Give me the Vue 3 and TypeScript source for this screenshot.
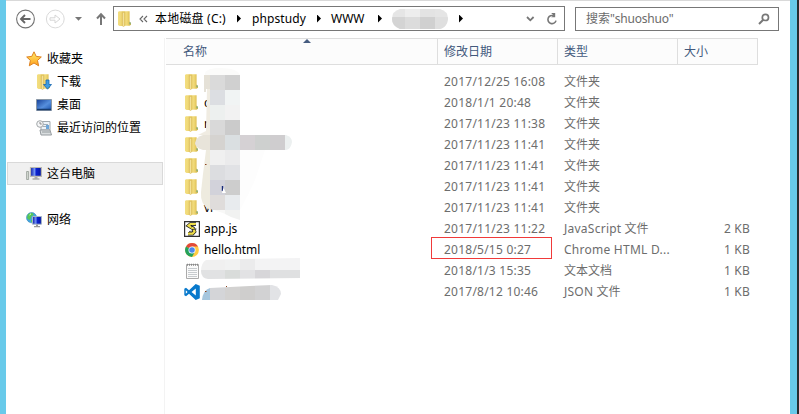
<script setup lang="ts">
import { computed } from 'vue'

type Icon = 'folder' | 'js' | 'chrome' | 'text' | 'vscode'
interface FileRow { icon: Icon; name: string; date: string; latin: string; cjk: string; size: string; marked?: boolean }
interface Tile { x: number; y: number; w: number; h: number; c: string }

const folder = (name: string, date: string): FileRow => ({ icon: 'folder', name, date, latin: '', cjk: '文件夹', size: '' })

const rows: FileRow[] = [
  folder('', '2017/12/25 16:08'),
  folder('c', '2018/1/1 20:48'),
  folder('n', '2017/11/23 11:38'),
  folder('', '2017/11/23 11:41'),
  folder('', '2017/11/23 11:41'),
  folder('', '2017/11/23 11:41'),
  folder('vi', '2017/11/23 11:41'),
  { icon: 'js', name: 'app.js', date: '2017/11/23 11:22', latin: 'JavaScript', cjk: '文件', size: '2 KB' },
  { icon: 'chrome', name: 'hello.html', date: '2018/5/15 0:27', latin: 'Chrome HTML D...', cjk: '', size: '1 KB', marked: true },
  { icon: 'text', name: '', date: '2018/1/3 15:35', latin: '', cjk: '文本文档', size: '1 KB' },
  { icon: 'vscode', name: '', date: '2017/8/12 10:46', latin: 'JSON', cjk: '文件', size: '1 KB' },
]

const tile = (x: number, y: number, w: number, h: number, c: string): Tile => ({ x, y, w, h, c })

const columnTiles = computed<Tile[]>(() => {
  const pairs = [
    ['#dadada', '#d0d0d0'], ['#dcdee2', '#f1f4f4'], ['#edf0ef', '#f2f2f2'], ['#d9d9d9', '#cbcbcb'],
    ['#d5d3d0', '#dadfe1'], ['#f0f0f0', '#ebebec'], ['#dcdde0', '#e1e2e5'], ['#d2d2da', '#cdcdcd'],
    ['#dfdcdb', '#e8ebee'], ['#f8f8f7', '#f1f2f1'],
  ]
  return pairs.flatMap(([a, b], i) => [tile(210, 75 + i * 15, 15, 15, a), tile(225, 75 + i * 15, 15, 15, b)])
})
const wideTiles: Tile[] = [
  tile(195, 135, 15, 15, '#e8e4da'), tile(210, 135, 15, 15, '#d5d3d0'), tile(225, 135, 15, 15, '#dadfe1'),
  tile(240, 135, 15, 15, '#d5d1d4'), tile(255, 135, 15, 15, '#ced0cf'), tile(270, 135, 15, 15, '#cfcdcf'),
  tile(285, 135, 8, 15, '#ecf0f0'),
]
const textTiles: Tile[] = [
  tile(200, 258, 25, 12, '#f0f0f0'), tile(225, 258, 15, 12, '#f1f2f2'), tile(240, 258, 15, 12, '#ebebec'),
  tile(255, 258, 45, 12, '#f3f3f4'), tile(200, 270, 25, 9, '#e1e2e3'), tile(225, 270, 15, 9, '#d9dcda'),
  tile(240, 270, 15, 9, '#e2e2e4'), tile(255, 270, 15, 9, '#d7d6d9'), tile(270, 270, 30, 9, '#dfe0e1'),
]
const jsonTiles: Tile[] = [
  tile(202, 285, 8, 15, '#a6c6de'), tile(210, 285, 15, 15, '#d4d5d8'), tile(225, 285, 15, 15, '#d3d2d1'),
  tile(240, 285, 15, 15, '#cfcecd'), tile(255, 285, 15, 15, '#d2d2d3'), tile(270, 285, 12, 15, '#e2e3e6'),
]
const masks = computed(() => [
  { id: 'tall', tiles: columnTiles.value },
  { id: 'wide', tiles: wideTiles },
  { id: 'note', tiles: textTiles },
  { id: 'json', tiles: jsonTiles },
])
</script>

<template>
  <div class="window">
    <svg class="defs" width="0" height="0">
      <defs>
        <linearGradient id="gold" x1="0" x2="1"><stop offset="0" stop-color="#f3de80" /><stop offset=".5" stop-color="#f0d978" /><stop offset="1" stop-color="#d6b23f" /></linearGradient>
        <linearGradient id="leaf" x1="0" x2="1"><stop offset="0" stop-color="#fdf5c8" /><stop offset="1" stop-color="#e9cd68" /></linearGradient>
        <linearGradient id="star" x1="0" y1="0" x2="0" y2="1"><stop offset="0" stop-color="#fff06c" /><stop offset="1" stop-color="#ff9e1d" /></linearGradient>
        <linearGradient id="screen" x1="0" y1="0" x2="1" y2="1"><stop offset="0" stop-color="#153e96" /><stop offset=".55" stop-color="#568fdd" /><stop offset="1" stop-color="#1950aa" /></linearGradient>
        <linearGradient id="monitor" x1="0" y1="0" x2="1" y2="0"><stop offset="0" stop-color="#0716a9" /><stop offset=".4" stop-color="#7a9cf7" /><stop offset=".5" stop-color="#0b22d2" /><stop offset="1" stop-color="#0517a0" /></linearGradient>
        <symbol id="folder" viewBox="0 0 16 16">
          <path d="M1 1 2 .3H7V15H2.5L1 14Z" fill="url(#gold)" />
          <path d="M6 .3H12.6V10.5L14 12V13.8L12.5 14.8H6Z" fill="url(#gold)" />
          <path d="M5.6 2 7.8 .8V14.6L6.4 15.8 5.6 15Z" fill="url(#leaf)" stroke="#d3b14b" stroke-width=".5" />
          <path d="M13 11.3V13.3" stroke="#5ca99d" stroke-width="1" />
        </symbol>
      </defs>
    </svg>

    <header class="toolbar">
      <svg class="nav" viewBox="0 0 102 24" width="102" height="24">
        <circle cx="14.5" cy="12" r="8.9" fill="#fff" stroke="#737373" stroke-width="1.1" />
        <path d="M19.5 12H10.5M14 8 10 12 14 16" fill="none" stroke="#666" stroke-width="1.9" />
        <circle cx="44.3" cy="12" r="8.9" fill="#fff" stroke="#dadada" />
        <path d="M39 10.8H44V8L49 12 44 16V13.2H39Z" fill="#fff" stroke="#d6d6d6" />
        <path d="M64 10H71L67.5 13.8Z" fill="#777" />
        <path d="M90 18V8M86 11.5 90 7.2 94 11.5" fill="none" stroke="#777" stroke-width="2" />
      </svg>
      <div class="address">
        <svg class="addr-folder" width="16" height="16"><use href="#folder" /></svg>
        <svg class="chevrons" viewBox="0 0 9 8" width="9" height="8"><path d="M4 1 1 4 4 7M8 1 5 4 8 7" fill="none" stroke="#666" stroke-width="1.1" /></svg>
        <span class="crumb drive">本地磁盘 (C:)</span><i class="tri" />
        <span class="crumb php">phpstudy</span><i class="tri" />
        <span class="crumb www">WWW</span><i class="tri" />
        <svg class="hidden-crumb" viewBox="0 0 56 20" width="56" height="20">
          <clipPath id="crumb"><path d="M8 0H48Q56 2 56 10 55 18 48 20H8Q0 17 0 10 0 2 8 0Z" /></clipPath>
          <g clip-path="url(#crumb)">
            <path d="M0 0H56V20H0Z" fill="#e5e5e5" /><path d="M13 0H28V8H13Z" fill="#ededed" /><path d="M28 0H43V8H28Z" fill="#e3e3e3" />
            <path d="M0 8H13V20H0Z" fill="#d4d4d4" /><path d="M13 8H28V20H13Z" fill="#dcdcdc" /><path d="M28 8H43V20H28Z" fill="#d0d0d0" /><path d="M43 8H56V20H43Z" fill="#dfdfdf" />
          </g>
        </svg><i class="tri" />
        <svg class="controls" viewBox="0 0 32 14" width="32" height="14">
          <path d="M1 5 4.3 8.3 7.6 5" fill="none" stroke="#777" stroke-width="1.8" />
          <path d="M27.7 3.8A4.1 4.1 0 1 0 30 8.6" fill="none" stroke="#777" stroke-width="1.6" /><path d="M25.2 1H29.2V5.2H25.2L27.5 3.6Z" fill="#777" />
        </svg>
      </div>
      <div class="search">
        <span>搜索<b>"shuoshuo"</b></span>
        <svg viewBox="0 0 12 12" width="12" height="12"><circle cx="7.4" cy="4.4" r="3.1" fill="none" stroke="#777" stroke-width="1.7" /><path d="M5 7 1 11" stroke="#777" stroke-width="2" /></svg>
      </div>
    </header>

    <div class="body">
      <nav class="sidebar">
        <div class="side">
          <svg width="16" height="16" viewBox="0 0 16 16"><path d="M8 .8 10.2 5.4 15.3 6 11.5 9.4 12.6 14.8 8 12 3.3 14.8 4.4 9.4.7 6 5.8 5.4Z" fill="url(#star)" stroke="#de811f" stroke-width="1" /></svg>
          <span>收藏夹</span>
        </div>
        <div class="side sub">
          <svg width="16" height="16" viewBox="0 0 16 16"><use href="#folder" width="16" height="16" /><path d="M10 6H13V10.5H15.5L11.5 15.2 7.5 10.5H10Z" fill="#3f9de2" stroke="#1766af" stroke-width=".8" /></svg>
          <span>下载</span>
        </div>
        <div class="side sub">
          <svg width="16" height="16" viewBox="0 0 16 16"><path d="M.5 2.5H15.5V13.5H.5Z" fill="url(#screen)" stroke="#8997a6" /><path d="M1 12.5H15" stroke="#173b6d" stroke-width="1.5" /></svg>
          <span>桌面</span>
        </div>
        <div class="side sub">
          <svg width="16" height="16" viewBox="0 0 16 16"><path d="M5 1.5H14V10H5Z" fill="#edf3f8" stroke="#a1a9ae" /><path d="M7 4.5H12M7 6.5H10" stroke="#a2aeb8" /><path d="M10 5H13V9H10Z" fill="#6ea6d8" /><path d="M4 10H14L15.5 15H5Z" fill="#d9dddf" stroke="#959b9f" /><path d="M6 12H14" stroke="#949b9e" /><circle cx="4" cy="4" r="3.3" fill="#f5f6f7" stroke="#a3a7a9" /><path d="M4 2V4H5.8" fill="none" stroke="#777" stroke-width=".8" /></svg>
          <span>最近访问的位置</span>
        </div>
        <div class="side picked">
          <svg width="16" height="16" viewBox="0 0 16 16"><path d="M.6 5.5H2.6V13.5H.6Z" fill="#d4dad3" stroke="#939b94" stroke-width=".8" /><path d="M4.5 1.5H15.4V10.3H4.5Z" fill="url(#monitor)" stroke="#b9b8b0" stroke-width="1.2" /><path d="M8.5 11H11.5V12.3H13.5V13.7H6.5V12.3H8.5Z" fill="#aaa" /></svg>
          <span>这台电脑</span>
        </div>
        <div class="side">
          <svg width="16" height="16" viewBox="0 0 16 16"><circle cx="5.6" cy="5.7" r="5.1" fill="#43a5e0" stroke="#3687b8" stroke-width=".6" /><path d="M1 6 2 2 6 .8 8 3 5.5 4 4.5 7 3 8ZM5 8 8 9V11L5 10Z" fill="#57c753" /><path d="M3.5 3 5 1.7" stroke="#e6ffe4" /><path d="M6.5 4.5H15.4V12.2H6.5Z" fill="url(#monitor)" stroke="#a5b5c4" /><path d="M10 12.5H12V14H14V15.3H8V14H10Z" fill="#999" /></svg>
          <span>网络</span>
        </div>
      </nav>

      <main class="list">
        <div class="head">
          <span class="name">名称</span><span>修改日期</span><span>类型</span><span>大小</span>
          <i class="sort" />
        </div>
        <div class="rows">
          <div v-for="(row, i) in rows" :key="i" class="row">
            <div class="file">
              <svg v-if="row.icon === 'folder'" width="16" height="16"><use href="#folder" /></svg>
              <svg v-else-if="row.icon === 'js'" width="16" height="16" viewBox="0 0 16 16"><path d="M.6.6H15.4V15.4H.6Z" fill="#fff" stroke="#333" stroke-width="1.2" /><path d="M12 3H6.5L4.5 4.7 9.5 7.7 10.5 10.5 8.5 12.7H4" fill="none" stroke="#222" stroke-width="3.6" /><path d="M12 3H6.5L4.5 4.7 9.5 7.7 10.5 10.5 8.5 12.7H4" fill="none" stroke="#f0df4b" stroke-width="2.2" /><path d="M7 6 12 4M8 8.5 12.5 8M5 10.5 9 10" stroke="#222" stroke-width=".8" /></svg>
              <svg v-else-if="row.icon === 'chrome'" width="16" height="16" viewBox="0 0 16 16"><circle cx="8" cy="8" r="6.9" fill="#fc4" /><path d="M8 8 2.02 4.55A6.9 6.9 0 0 1 13.98 4.55H8Z" fill="#e2493b" /><path d="M8 8 2.02 4.55A6.9 6.9 0 0 0 8 14.9L11 9.7Z" fill="#25a15d" /><circle cx="8" cy="8" r="3.5" fill="#fff" /><circle cx="8" cy="8" r="2.8" fill="#4a87ec" /></svg>
              <svg v-else-if="row.icon === 'text'" width="16" height="16" viewBox="0 0 16 16"><path d="M2.5 1.5H14.5V15.5H2.5Z" fill="#fafafa" stroke="#aaa" /><path d="M4 5.5H13M4 7.5H13M4 9.5H13M4 11.5H13M4 13.5H13" stroke="#c7cbce" /><path d="M3 1.8H14" stroke="#888" stroke-width="2" stroke-dasharray="1 1" /></svg>
              <svg v-else width="16" height="16" viewBox="0 0 16 16"><path d="M11.7 0 15.8 1.8V14.2L11.7 16 5 9.7 2 12.2.3 11.3V4.7L2 3.8 5 6.3ZM11.8 4.5 7.5 8 11.8 11.5ZM1.8 6.2V9.8L3.6 8Z" fill="#0879cc" fill-rule="evenodd" /></svg>
              <span>{{ row.name }}</span>
            </div>
            <span class="date" :class="{ marked: row.marked }">{{ row.date }}</span>
            <span class="kind"><b v-if="row.latin">{{ row.latin }}</b>{{ row.latin && row.cjk ? ' ' : '' }}{{ row.cjk }}</span>
            <span class="size">{{ row.size }}</span>
          </div>
        </div>
      </main>
    </div>

    <svg class="mosaic" viewBox="0 0 799 414" width="799" height="414">
      <clipPath id="tall"><path d="M210 75H240V220L231 217 223 213 210 209Z" /></clipPath>
      <clipPath id="wide"><path d="M203 135H286Q292 137 292 142 291 149 286 150H203Q195 148 195 143 196 137 203 135Z" /></clipPath>
      <clipPath id="note"><path d="M206 260 240 259 300 258V278L208 279Q201 278 201 271 201 263 206 260Z" /></clipPath>
      <clipPath id="json"><path d="M202 300Q203 290 210 288L250 286 272 285Q281 287 281 294L278 300Z" /></clipPath>
      <path d="M205 73Q207 68 220 68 237 68 240 75H205Z" fill="#fbfbfa" />
      <path d="M204 75H210V89H206V92H204Z" fill="#e5e1d7" />
      <path d="M207 89H210V135H198L206 131Z" fill="#f0ece2" />
      <path d="M206 150H210V210Q200 205 201 192L203 174Z" fill="#eeebdf" />
      <path d="M240 150H265L255 180 248 195 240 210Z" fill="#fdfdfd" />
      <g v-for="mask in masks" :key="mask.id" :clip-path="`url(#${mask.id})`">
        <rect v-for="(t, i) in mask.tiles" :key="i" :x="t.x" :y="t.y" :width="t.w" :height="t.h" :fill="t.c" />
      </g>
      <path d="M222.5 186V191" stroke="#172a77" stroke-width="1.4" /><path d="M223.5 188 226 193H222Z" fill="#fff" />
      <path d="M205 164.5H206.5M226 286.5H227M205 291.5H206.5" stroke="#8c431e" />
    </svg>
  </div>
</template>

<style>
body { margin: 0; overflow: hidden; background: #fff; }
</style>

<style scoped>
* { box-sizing: border-box; }
.window { position: relative; width: 799px; height: 414px; display: flex; flex-direction: column; padding-left: 6px; padding-right: 9px; background: linear-gradient(to right, #68caea 6px, #fff 6px 790px, #68caea 790px 797px, #292d31 797px); font: 12px/20px "Noto Sans", "Noto Sans CJK SC", sans-serif; color: #000; }
.defs, .mosaic { position: absolute; left: 0; top: 0; pointer-events: none; }
svg { flex: none; display: block; }
b { font-weight: 400; }
.toolbar { height: 38px; flex: none; display: flex; align-items: flex-start; padding: 6px 0 0 5px; border-top: 1px solid #d9d9d9; }
.address { width: 452px; height: 25px; display: flex; align-items: center; border: 1px solid #777; margin-top: -1px; background: #fff; }
.addr-folder { margin-left: 3px; }
.chevrons { margin: 0 7px 0 6px; }
.crumb { white-space: nowrap; line-height: 19px; padding-bottom: 1px; }
.drive { width: 82px; letter-spacing: .2px; }
.php { width: 65px; margin-left: 11px; letter-spacing: .1px; }
.www { width: 47px; margin-left: 10px; }
.tri { width: 4px; height: 8px; background: #000; clip-path: polygon(0 0, 100% 50%, 0 100%); }
.hidden-crumb { margin: 0 11px 0 10px; }
.controls { margin-left: auto; margin-right: 6px; }
.search { width: 204px; height: 24px; margin-left: 10px; padding: 0 8px 0 10px; display: flex; align-items: center; justify-content: space-between; border: 1px solid #777; color: #6b6b6b; }
.search b { letter-spacing: -.2px; }
.body { flex: 1; display: flex; min-height: 0; }
.sidebar { width: 159px; flex: none; padding-top: 9px; border-right: 1px solid #f3f3f3; }
.side { height: 23px; display: flex; align-items: center; gap: 5px; padding-left: 20px; white-space: nowrap; }
.sub { padding-left: 30px; }
.picked { margin: 23px 1px; padding-left: 18px; border: 1px solid #d9d9d9; background: #f0f0f0; }
.list { width: 592px; margin-left: 1px; }
.head { position: relative; display: grid; grid-template-columns: 272px 120px 120px 80px; height: 27px; border-top: 1px solid #dedede; border-bottom: 1px solid #dedede; background: #fcfcfc; color: #43597c; line-height: 25px; }
.head span { border-right: 1px solid #dedede; padding-left: 6px; }
.head .name { padding-left: 17px; }
.sort { position: absolute; left: 137px; top: 0; width: 8px; height: 4px; background: #465c80; clip-path: polygon(50% 0, 100% 100%, 0 100%); }
.rows { padding-top: 6px; }
.row { height: 21px; display: grid; grid-template-columns: 265px 127px 120px 80px; align-items: center; color: #6d6d6d; white-space: nowrap; }
.file { display: flex; align-items: center; gap: 4px; padding-left: 18px; color: #000; letter-spacing: -.07px; }
.date { width: 121px; height: 22px; align-self: start; margin-top: -2px; padding: 1.5px 0 0 12px; border: 1px solid transparent; letter-spacing: .23px; }
.marked { border-color: #f03a3a; }
.kind { padding-left: 6px; }
.kind b { letter-spacing: .25px; }
.size { text-align: right; padding-right: 8px; letter-spacing: .2px; }
</style>
